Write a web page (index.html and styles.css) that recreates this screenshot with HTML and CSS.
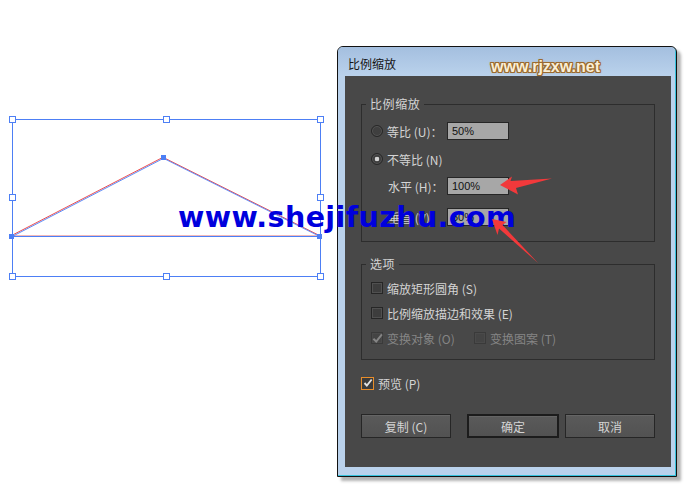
FILE: index.html
```html
<!DOCTYPE html>
<html lang="zh-CN">
<head>
<meta charset="utf-8">
<title>比例缩放</title>
<link rel="stylesheet" href="styles.css">
</head>
<body>
<div class="stage">
  <svg class="artboard" width="337" height="488" viewBox="0 0 337 488">
    <rect x="12.5" y="119.5" width="308" height="157" fill="none" stroke="#4d7ff5"/>
    <line x1="12" y1="235.5" x2="319" y2="235.5" stroke="#f3b9b9"/>
    <line x1="12" y1="236.5" x2="319" y2="236.5" stroke="#4d7ff5"/>
    <polyline points="12,235.3 163,157.3 319,235.3" fill="none" stroke="#ee4f4f"/>
    <polyline points="12.5,236.3 163.5,158.3 319.5,236.3" fill="none" stroke="#4d7ff5" stroke-width="0.9"/>
    <g fill="#fff" stroke="#4d7ff5">
      <rect x="9.5" y="116.5" width="6" height="6"/>
      <rect x="163.5" y="116.5" width="6" height="6"/>
      <rect x="317.5" y="116.5" width="6" height="6"/>
      <rect x="9.5" y="194.5" width="6" height="6"/>
      <rect x="317.5" y="194.5" width="6" height="6"/>
      <rect x="9.5" y="273.5" width="6" height="6"/>
      <rect x="163.5" y="273.5" width="6" height="6"/>
      <rect x="317.5" y="273.5" width="6" height="6"/>
    </g>
    <g fill="#4d7ff5">
      <rect x="9" y="234" width="5" height="5"/>
      <rect x="161" y="155" width="5" height="5"/>
      <rect x="317" y="234" width="5" height="5"/>
    </g>
  </svg>
  <div class="dialog">
    <div class="titlebar">
      <span class="title">比例缩放</span>
      <span class="site-mark">www.rjzxw.net</span>
    </div>
    <div class="client">
      <div class="panel">
        <fieldset class="group group-scale">
          <legend>比例缩放</legend>
          <div class="row">
            <span class="radio"></span><span class="lbl">等比 (U)：</span><span class="field">50%</span>
          </div>
          <div class="row r2">
            <span class="radio on"></span><span class="lbl">不等比 (N)</span>
          </div>
          <div class="row r3 indent">
            <span class="lbl">水平 (H)：</span><span class="field">100%</span>
          </div>
          <div class="row r4 indent">
            <span class="lbl">垂直 (V)：</span><span class="field">50%</span>
          </div>
        </fieldset>
        <fieldset class="group group-opts">
          <legend>选项</legend>
          <div class="crow">
            <span class="check"></span><span>缩放矩形圆角 (S)</span>
          </div>
          <div class="crow c2">
            <span class="check"></span><span>比例缩放描边和效果 (E)</span>
          </div>
          <div class="crow c3 disabled">
            <span class="item first"><span class="check dim"><svg width="11" height="11" viewBox="0 0 12 12"><path d="M1.5 6.2 L4.6 9.3 L10.8 1.6" fill="none" stroke="#858585" stroke-width="2.2"/></svg></span><span>变换对象 (O)</span></span>
            <span class="item"><span class="check dim"></span><span>变换图案 (T)</span></span>
          </div>
        </fieldset>
        <div class="preview">
          <span class="check accent"><svg width="10" height="10" viewBox="0 0 12 12"><path d="M1.8 6 L4.6 9 L10.4 1.8" fill="none" stroke="#e2e2e2" stroke-width="2.2"/></svg></span><span>预览 (P)</span>
        </div>
        <div class="buttons">
          <span class="btn">复制 (C)</span>
          <span class="btn btn-default">确定</span>
          <span class="btn btn-last">取消</span>
        </div>
      </div>
    </div>
  </div>
</div>
<div class="watermark">www.shejifuzhu.com</div>
<svg class="arrows" width="687" height="488" viewBox="0 0 687 488">
  <polygon points="500,185 512,176.5 510.5,181 552,178.5 516,188 518,194.5" fill="#f2393b"/>
  <polygon points="492,219 506.5,222 502.5,225 538,263 499,228.5 497.5,235" fill="#f2393b"/>
</svg>
</body>
</html>
```

FILE: styles.css
```css
* { box-sizing: border-box; }
html, body { margin: 0; padding: 0; }
body {
  width: 687px;
  height: 488px;
  overflow: hidden;
  position: relative;
  background: #ffffff;
  font-family: "Noto Sans CJK SC", "Noto Sans", sans-serif;
}
.stage { display: flex; align-items: flex-start; }
.artboard { display: block; flex: none; }

.dialog {
  flex: none;
  margin-top: 46px;
  width: 340px;
  height: 431px;
  padding: 0 1px 1px 0;
  border: 1px solid #121212;
  border-radius: 6px 6px 0 0;
  background: #bad2ec;
  box-shadow: inset -1px -1px 0 #36c3dd, 4px 4px 3px rgba(0,0,0,0.3);
  display: flex;
  flex-direction: column;
}
.titlebar {
  position: relative;
  height: 29px;
  flex: none;
  padding: 9px 0 0 10px;
  border-radius: 5px 5px 0 0;
  background: linear-gradient(#a4bfdf, #bad2ec);
}
.title {
  display: block;
  font-size: 12px;
  line-height: 16px;
  color: #151515;
}
.site-mark {
  position: absolute;
  left: 153px;
  top: 11px;
  font-family: "Liberation Sans", sans-serif;
  font-weight: bold;
  font-size: 16px;
  line-height: 18px;
  color: #fbefd6;
  white-space: nowrap;
  text-shadow: 1px 0 #9a6a2f, -1px 0 #9a6a2f, 0 1px #9a6a2f, 0 -1px #9a6a2f,
    1px 1px #9a6a2f, -1px -1px #9a6a2f, 1px -1px #9a6a2f, -1px 1px #9a6a2f,
    0 0 3px #c08a44;
}
.client { padding: 0 4px 8px 7px; }
.panel {
  height: 391px;
  background: #484848;
  padding: 20px 16px 0 16px;
  display: flex;
  flex-direction: column;
  color: #d4d4d4;
  font-size: 12px;
}
.group {
  margin: 0;
  min-width: 0;
  border: 1px solid #2d2d2d;
}
.group legend {
  margin-left: -5px;
  padding: 0 4px;
  font-size: 12px;
  line-height: 16px;
  letter-spacing: 0.6px;
  color: #d4d4d4;
}
.group-scale { padding: 10px 0 15px 9px; }
.group-opts { margin-top: 14px; padding: 8px 0 13px 9px; }

.row { display: flex; align-items: center; height: 18px; }
.r2 { margin-top: 10px; }
.r3 { margin-top: 9px; }
.r4 { margin-top: 13px; }
.indent { padding-left: 17px; }
.lbl { width: 60px; flex: none; white-space: nowrap; }
.indent .lbl { width: 59px; }
.radio {
  flex: none;
  width: 12px;
  height: 12px;
  margin-right: 4px;
  border-radius: 50%;
  border: 1px solid #272727;
  background: #3f3f3f;
  box-shadow: inset 0 0 0 1px #555;
}
.radio.on { background: radial-gradient(circle, #d2d2d2 0 2px, #3f3f3f 2.6px); }
.field {
  flex: none;
  width: 62px;
  height: 18px;
  border: 1px solid #262626;
  background: #a7a7a7;
  color: #111;
  padding-left: 4px;
  font-family: "Liberation Sans", sans-serif;
  font-size: 11px;
  line-height: 16px;
}

.crow { display: flex; align-items: center; height: 16px; white-space: nowrap; }
.c2, .c3 { margin-top: 9px; }
.check {
  flex: none;
  width: 12px;
  height: 12px;
  margin-right: 4px;
  border: 1px solid #262626;
  background: #3d3d3d;
  box-shadow: inset 0 0 0 1px #505050;
  display: flex;
  align-items: center;
  justify-content: center;
}
.check svg { display: block; flex: none; }
.disabled { color: #858585; }
.check.dim { border-color: #3a3a3a; background: #444; box-shadow: inset 0 0 0 1px #4a4a4a; }
.item { display: flex; align-items: center; }
.item.first { width: 103px; }

.preview { display: flex; align-items: center; height: 16px; margin-top: 15px; }
.check.accent {
  width: 13px;
  height: 13px;
  margin-right: 4px;
  border: 1px solid #e88d2a;
  background: #3b3b3b;
  box-shadow: none;
}

.buttons { display: flex; margin-top: 23px; height: 24px; }
.btn {
  flex: none;
  width: 90px;
  height: 24px;
  border: 1px solid #262626;
  background: linear-gradient(#5a5a5a, #525252);
  box-shadow: inset 0 1px 0 #656565;
  color: #d4d4d4;
  font-size: 12px;
  display: flex;
  align-items: center;
  justify-content: center;
  white-space: nowrap;
}
.btn-default { width: 92px; margin-left: 16px; border: 2px solid #1c1c1c; }
.btn-last { margin-left: 6px; }

.watermark {
  position: absolute;
  left: 178px;
  top: 204px;
  font-family: "DejaVu Sans", sans-serif;
  font-weight: bold;
  font-size: 28.5px;
  letter-spacing: 0.4px;
  line-height: 1;
  color: #0000dd;
  white-space: nowrap;
}
.arrows { position: absolute; left: 0; top: 0; pointer-events: none; }
```
